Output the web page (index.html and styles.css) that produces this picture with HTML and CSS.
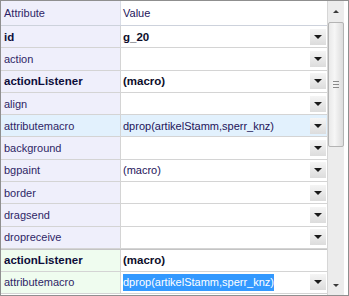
FILE: index.html
```html
<!DOCTYPE html>
<html>
<head>
<meta charset="utf-8">
<link rel="stylesheet" href="styles.css">
</head>
<body>
<div class="panel">
  <div class="table">
    <div class="head">
      <div class="hcell attr">Attribute</div>
      <div class="hcell val">Value</div>
    </div>
    <div class="section top">
      <div class="row"><div class="attr b">id</div><div class="val b"><span class="txt">g_20</span><span class="dd"></span></div></div>
      <div class="row"><div class="attr">action</div><div class="val"><span class="txt"></span><span class="dd"></span></div></div>
      <div class="row"><div class="attr b">actionListener</div><div class="val b"><span class="txt">(macro)</span><span class="dd"></span></div></div>
      <div class="row"><div class="attr">align</div><div class="val"><span class="txt"></span><span class="dd"></span></div></div>
      <div class="row sel"><div class="attr">attributemacro</div><div class="val"><span class="txt">dprop(artikelStamm,sperr_knz)</span><span class="dd"></span></div></div>
      <div class="row"><div class="attr">background</div><div class="val"><span class="txt"></span><span class="dd"></span></div></div>
      <div class="row"><div class="attr">bgpaint</div><div class="val"><span class="txt">(macro)</span><span class="dd"></span></div></div>
      <div class="row"><div class="attr">border</div><div class="val"><span class="txt"></span><span class="dd"></span></div></div>
      <div class="row"><div class="attr">dragsend</div><div class="val"><span class="txt"></span><span class="dd"></span></div></div>
      <div class="row"><div class="attr">dropreceive</div><div class="val"><span class="txt"></span><span class="dd"></span></div></div>
    </div>
    <div class="section green">
      <div class="row"><div class="attr b">actionListener</div><div class="val b"><span class="txt">(macro)</span></div></div>
      <div class="row"><div class="attr">attributemacro</div><div class="val"><span class="txt"><span class="hl">dprop(artikelStamm,sperr_knz)</span></span><span class="dd"></span></div></div>
    </div>
  </div>
  <div class="scrollbar">
    <div class="arrow up"></div>
    <div class="track">
      <div class="thumb"><span class="grip"></span></div>
    </div>
    <div class="arrow down"></div>
  </div>
</div>
</body>
</html>
```

FILE: styles.css
```css
html, body {
  margin: 0;
  padding: 0;
  background: #ffffff;
}

.panel {
  width: 349px;
  height: 296px;
  box-sizing: border-box;
  border: 1px solid #8f8f8f;
  display: flex;
  background: #ffffff;
  font-family: "Liberation Sans", Arial, sans-serif;
  font-size: 11px;
}

.table {
  width: 327px;
  box-sizing: border-box;
  border-right: 1px solid #d6d6d6;
  display: flex;
  flex-direction: column;
}

.head {
  height: 25px;
  box-sizing: border-box;
  display: flex;
  background: linear-gradient(#fbfcfe, #e2e7f3);
  border-bottom: 1px solid #cdd2dc;
  color: #1c2a5a;
}

.hcell {
  display: flex;
  align-items: center;
  padding-left: 3px;
  box-sizing: border-box;
}

.hcell.attr {
  width: 120px;
  border-right: 1px solid #d8dce6;
}

.row {
  height: 22.3px;
  box-sizing: border-box;
  display: flex;
  border-bottom: 1px solid #d4d4d4;
}

.green .row {
  height: 22px;
}

.section.green {
  border-top: 1px solid #c4c4c4;
}

.attr {
  width: 120px;
  box-sizing: border-box;
  border-right: 1px solid #d4d4d4;
  background: #efeffb;
  color: #2e1f66;
  display: flex;
  align-items: center;
  padding-left: 3px;
}

.green .attr {
  background: #effcef;
}

.attr.b {
  font-weight: bold;
  color: #0d0d3a;
  font-size: 11.5px;
}

.val {
  flex: 1;
  display: flex;
  align-items: center;
  padding-left: 2px;
  color: #23145a;
  background: #ffffff;
}

.val.b {
  font-weight: bold;
  color: #0d0d2a;
  font-size: 11.5px;
}

.sel .attr,
.sel .val {
  background: #e2f1fd;
}

.txt {
  flex: 1;
  white-space: nowrap;
}

.hl {
  background: #3399ff;
  color: #ffffff;
  padding: 2px 0 3px 0;
}

.dd {
  width: 16px;
  height: 16px;
  margin-right: 1px;
  background: linear-gradient(#f5f5f5, #dcdcdc);
  position: relative;
}

.dd::after {
  content: "";
  position: absolute;
  left: 4px;
  top: 6px;
  border-left: 4px solid transparent;
  border-right: 4px solid transparent;
  border-top: 4px solid #1a1a1a;
}

.scrollbar {
  width: 16px;
  margin-left: 0;
  background: #ececec;
  display: flex;
  flex-direction: column;
}

.arrow {
  height: 20px;
  position: relative;
}

.arrow.up::after {
  content: "";
  position: absolute;
  left: 5px;
  top: 9px;
  border-left: 3px solid transparent;
  border-right: 3px solid transparent;
  border-bottom: 3px solid #3a3a3a;
}

.arrow.down {
  height: 18px;
}

.arrow.down::after {
  content: "";
  position: absolute;
  left: 5px;
  top: 7px;
  border-left: 3px solid transparent;
  border-right: 3px solid transparent;
  border-top: 3px solid #3a3a3a;
}

.track {
  flex: 1;
  padding-top: 1px;
}

.thumb {
  height: 125px;
  box-sizing: border-box;
  border: 1px solid #b4b4b4;
  border-radius: 2px;
  background: linear-gradient(90deg, #e9e9e9, #f6f6f6 40%, #dcdcdc);
  display: flex;
  align-items: center;
  justify-content: center;
}

.grip {
  width: 6px;
  height: 5px;
  border-top: 1px solid #8a8a8a;
  border-bottom: 1px solid #8a8a8a;
  position: relative;
}

.grip::after {
  content: "";
  position: absolute;
  left: 0;
  right: 0;
  top: 2px;
  border-top: 1px solid #8a8a8a;
}
```
